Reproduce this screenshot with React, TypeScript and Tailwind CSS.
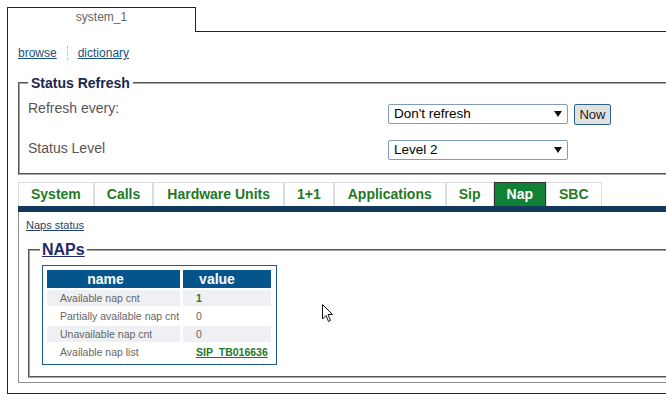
import React from 'react'

const tabs = ['System', 'Calls', 'Hardware Units', '1+1', 'Applications', 'Sip', 'Nap', 'SBC']

const rows: { name: string; value: string; kind: 'green' | 'plain' | 'link' }[] = [
  { name: 'Available nap cnt', value: '1', kind: 'green' },
  { name: 'Partially available nap cnt', value: '0', kind: 'plain' },
  { name: 'Unavailable nap cnt', value: '0', kind: 'plain' },
  { name: 'Available nap list', value: 'SIP_TB016636', kind: 'link' },
]

function Select({ label }: { label: string }) {
  return (
    <div className="flex h-[20px] w-[180px] items-center justify-between rounded-[2px] border border-[#7f9db9] bg-white pl-[5px] pr-[5px] text-[13.5px] leading-[16px] text-black">
      <span>{label}</span>
      <svg width="8" height="6" viewBox="0 0 8 6">
        <path d="M0 0 H8 L4 6 Z" fill="#111" />
      </svg>
    </div>
  )
}

export default function App() {
  return (
    <div className="relative h-[418px] w-[666px] overflow-hidden bg-white font-['Liberation_Sans',Arial,sans-serif]">
      <div className="w-[760px] pl-[7px] pt-[7px]">
        {/* top tab */}
        <div className="flex h-[25px]">
          <div className="w-[189px] border-x border-t border-[#222] pt-[2px] text-center text-[12px] leading-[14px] text-[#666]">
            system_1
          </div>
          <div className="flex-1 border-b border-[#222]" />
        </div>

        <div className="border-b border-l border-[#222] pb-[10px] pl-[10px] pt-[14px]">
          <div className="flex h-[14px] items-center text-[12px] leading-[14px] text-[#1d4f7c]">
            <a className="underline">browse</a>
            <span className="mx-[10px] h-[14px] border-l border-dotted border-[#f0a050]" />
            <a className="underline">dictionary</a>
          </div>

          <fieldset className="mt-[15px] border-2 border-[#a8a8a8] [border-style:groove] pb-[13px] pl-[8px] pt-[8px]">
            <legend className="px-[3px] text-[14px] font-bold leading-[16px] text-[#1a2650]">Status Refresh</legend>
            <div className="flex h-[25px]">
              <div className="w-[360px] pt-[1px] text-[14px] leading-[16px] text-[#555]">Refresh every:</div>
              <div className="mt-[5px] flex items-start">
                <Select label="Don't refresh" />
                <button className="ml-[6px] h-[21px] w-[37px] rounded-[2px] border border-[#2c628b] bg-[#e1e1e1] text-[13px] leading-[16px] text-[#222]">
                  Now
                </button>
              </div>
            </div>
            <div className="mt-[15px] flex">
              <div className="w-[360px] pt-[1px] text-[14px] leading-[16px] text-[#555]">Status Level</div>
              <div className="mt-[1px]">
                <Select label="Level 2" />
              </div>
            </div>
          </fieldset>

          {/* tab strip */}
          <div className="mt-[7px] flex">
            {tabs.map((t) => (
              <div
                key={t}
                className={
                  t === 'Nap'
                    ? 'flex h-[24px] items-center border-x border-t border-[#333] bg-[#118135] px-[12px] text-[14px] font-bold text-white'
                    : t === 'Hardware Units' || t === 'Applications'
                      ? 'flex h-[24px] items-center border-x border-t border-[#d9dde6] bg-white px-[13px] text-[14px] font-bold text-[#1f7a1f]'
                      : 'flex h-[24px] items-center border-x border-t border-[#d9dde6] bg-white px-[12px] text-[14px] font-bold text-[#1f7a1f]'
                }
              >
                {t}
              </div>
            ))}
          </div>
          <div className="h-[6px] bg-[#133a5c]" />

          <div className="border-b border-l border-[#8d8d8d] pb-[4px] pl-[7px] pt-[7px]">
            <a className="block text-[11px] leading-[13px] text-[#1d3f73] underline">Naps status</a>

            <fieldset className="ml-[2px] mt-[9px] border-2 border-[#a8a8a8] [border-style:groove] pb-[11px] pl-[12px] pt-[6px]">
              <legend className="-ml-[2px] px-[2px] text-[16px] font-bold leading-[18px] text-[#1f2a66] underline">NAPs</legend>
              <div className="w-[235px] border border-[#1c5a8c] p-[4px]">
                <div className="grid grid-cols-[133px_88px] gap-x-[3px] gap-y-[2px]">
                  <div className="h-[18px] bg-[#06548c] pr-[16px] text-center text-[14px] font-bold leading-[18px] text-white">name</div>
                  <div className="h-[18px] bg-[#06548c] pr-[20px] text-center text-[14px] font-bold leading-[18px] text-white">value</div>
                  {rows.map((r, i) => (
                    <React.Fragment key={r.name}>
                      <div className={`h-[16px] whitespace-nowrap pl-[13px] text-[10.5px] leading-[16px] text-[#666] ${i % 2 === 0 ? 'bg-[#eef0f4]' : 'bg-white'}`}>
                        {r.name}
                      </div>
                      <div
                        className={`h-[16px] whitespace-nowrap pl-[13px] text-[10.5px] leading-[16px] ${i % 2 === 0 ? 'bg-[#eef0f4]' : 'bg-white'} ${
                          r.kind === 'green'
                            ? 'font-bold text-[#2b7a2b]'
                            : r.kind === 'link'
                              ? 'font-bold text-[#1a7a2a] underline'
                              : 'text-[#666]'
                        }`}
                      >
                        {r.value}
                      </div>
                    </React.Fragment>
                  ))}
                </div>
              </div>
            </fieldset>
          </div>
        </div>
      </div>

      {/* mouse pointer */}
      <svg className="absolute left-[321px] top-[303px]" width="13" height="20" viewBox="0 0 13 20">
        <path d="M1.5 1.5 V16 L5 12.5 L7.5 18.5 L9.5 17.5 L7 11.5 H11.5 Z" fill="#fff" stroke="#111" strokeWidth="1" strokeLinejoin="round" />
      </svg>
    </div>
  )
}
